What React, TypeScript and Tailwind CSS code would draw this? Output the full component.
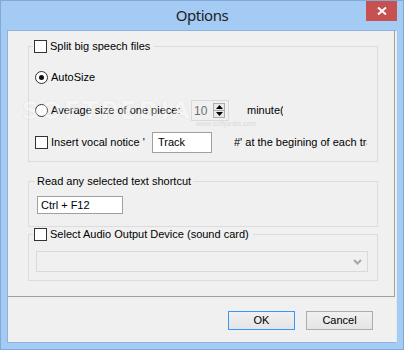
import React from "react";

function Check() {
  return <span className="block h-[13px] w-[13px] shrink-0 border border-[#333] bg-white" />;
}

function Radio({ checked }: { checked?: boolean }) {
  return (
    <span className="flex h-[13px] w-[13px] shrink-0 items-center justify-center rounded-full border border-[#333] bg-white">
      {checked ? <span className="block h-[5px] w-[5px] rounded-full bg-[#111]" /> : null}
    </span>
  );
}

function SpinBox() {
  return (
    <div className="flex h-[21px] w-[38px] items-center border border-[#d9d9d9] bg-[#f0f0f0] pl-[2px]">
      <span className="w-[19px] text-[12px] text-[#6d6d6d]">10</span>
      <div className="flex flex-col">
        <span className="flex h-[8px] w-[12px] items-center justify-center border border-[#acacac] bg-[#e9e9e9]">
          <svg width="7" height="4" viewBox="0 0 7 4">
            <polygon points="3.5,0 7,4 0,4" fill="#000" />
          </svg>
        </span>
        <span className="-mt-px flex h-[8px] w-[12px] items-center justify-center border border-[#acacac] bg-[#e9e9e9]">
          <svg width="7" height="4" viewBox="0 0 7 4">
            <polygon points="0,0 7,0 3.5,4" fill="#000" />
          </svg>
        </span>
      </div>
    </div>
  );
}

export default function App() {
  return (
    <div className="relative h-[350px] w-[404px] border border-[#83aad6] bg-[#a4cbf3] font-['Liberation_Sans',Arial,sans-serif] text-[11px] leading-none text-black">
      {/* title bar */}
      <div className="flex h-[29px] items-center justify-center">
        <span className="font-['Noto_Sans',sans-serif] text-[15px] tracking-[-0.5px] text-[#1e1e1e]">Options</span>
      </div>
      <div className="absolute right-[6px] top-0 flex h-[20px] w-[31px] items-center justify-center bg-[#c75050]">
        <svg width="10" height="8" viewBox="0 0 10 8">
          <path d="M1 0.5 L9 7.5 M9 0.5 L1 7.5" stroke="#fff" strokeWidth="2" />
        </svg>
      </div>

      {/* client */}
      <div className="ml-[6px] h-[313px] w-[390px] border border-[#8fb3dc] border-r-[#e8e8e8] bg-[#f0f0f0]">
        <div className="relative h-[266px] w-[387px] border-b border-r border-[#a0a0a0] pl-[20px] pt-[9px]">
          <fieldset className="w-[350px] border border-[#dcdcdc] pb-[8px]">
            <legend className="ml-[4px] flex h-[13px] items-center gap-[3px] pl-[1px] pr-[4px]">
              <Check />
              <span>Split big speech files</span>
            </legend>
            <div className="mt-[14px] flex h-[21px] items-center pl-[6px]">
              <Radio checked />
              <span className="ml-[3px]">AutoSize</span>
            </div>
            <div className="mt-[12px] flex h-[21px] items-center pl-[6px]">
              <Radio />
              <span className="ml-[3px] w-[140px]">Average size of one piece:</span>
              <SpinBox />
              <span className="ml-[18px] w-[36px] overflow-hidden whitespace-nowrap">minute(s)</span>
            </div>
            <div className="mt-[11px] flex h-[21px] items-center pl-[6px]">
              <Check />
              <span className="ml-[3px] w-[101px]">Insert vocal notice '</span>
              <div className="flex h-[21px] w-[60px] items-center border border-[#a0a0a0] bg-white pl-[5px]">Track</div>
              <span className="ml-[22px] w-[133px] overflow-hidden whitespace-nowrap">#' at the begining of each track</span>
            </div>
          </fieldset>

          <fieldset className="mt-[13px] w-[350px] border border-[#dcdcdc] pb-[12px]">
            <legend className="ml-[6px] flex h-[13px] items-center px-[2px]">
              <span>Read any selected text shortcut</span>
            </legend>
            <div className="ml-[8px] mt-[8px] flex h-[18px] w-[86px] items-center border border-[#a0a0a0] bg-white pl-[3px]">
              Ctrl + F12
            </div>
          </fieldset>

          <fieldset className="mt-[1px] w-[350px] border border-[#dcdcdc] pb-[8px]">
            <legend className="ml-[4px] flex h-[13px] items-center gap-[3px] pl-[1px] pr-[4px]">
              <Check />
              <span>Select Audio Output Device (sound card)</span>
            </legend>
            <div className="ml-[7px] mt-[10px] flex h-[21px] w-[332px] items-center justify-end border border-[#d9d9d9] bg-[#f0f0f0] pr-[5px]">
              <svg width="9" height="6" viewBox="0 0 9 6">
                <polyline points="1,1 4.5,4.5 8,1" fill="none" stroke="#a6a6a6" strokeWidth="2" />
              </svg>
            </div>
          </fieldset>

          {/* watermark */}
          <div className="pointer-events-none absolute left-[14px] top-[68px] flex items-end gap-[4px] opacity-35">
            <span className="font-['DejaVu_Sans',sans-serif] text-[24px] font-bold tracking-[2px] text-white [text-shadow:0_0_1px_#9a9a9a]">SOFTPEDIA</span>
            <span className="mb-[-4px] text-[7px] text-[#b0b0b0]">www.softpedia.com</span>
          </div>
        </div>

        <div className="flex justify-end gap-[11px] pr-[23px] pt-[14px]">
          <button className="flex h-[19px] w-[67px] items-center justify-center border border-[#3399ff] bg-gradient-to-b from-[#f0f0f0] to-[#e5e5e5]">
            OK
          </button>
          <button className="flex h-[19px] w-[67px] items-center justify-center border border-[#acacac] bg-gradient-to-b from-[#f0f0f0] to-[#e5e5e5]">
            Cancel
          </button>
        </div>
      </div>
    </div>
  );
}
